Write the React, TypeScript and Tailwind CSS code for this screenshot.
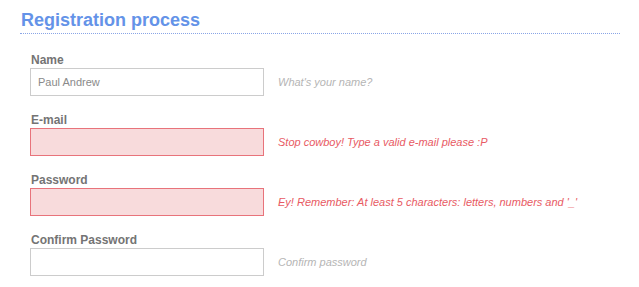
import React from 'react';

interface Field {
  label: string;
  value?: string;
  hint: string;
  error?: boolean;
}

const fields: Field[] = [
  { label: 'Name', value: 'Paul Andrew', hint: "What's your name?" },
  { label: 'E-mail', hint: 'Stop cowboy! Type a valid e-mail please :P', error: true },
  { label: 'Password', hint: "Ey! Remember: At least 5 characters: letters, numbers and '_'", error: true },
  { label: 'Confirm Password', hint: 'Confirm password' },
];

export default function App() {
  return (
    <div className="min-h-screen bg-white pl-[20px] pt-[8px] font-['Liberation_Sans',Arial,sans-serif]">
      <h1 className="w-[600px] border-b border-dotted border-[#8aa5e6] pl-[1px] pb-[1px] text-[18px] font-bold leading-[24px] text-[#6493e8]">
        Registration process
      </h1>
      <div className="mt-[19px] flex flex-col gap-[17px] pl-[10px]">
        {fields.map((f) => (
          <div key={f.label} className="flex flex-col">
            <label className="mb-[1px] pl-[1px] text-[12px] font-bold leading-[14px] text-[#747474]">
              {f.label}
            </label>
            <div className="flex items-center gap-[14px]">
              <input
                type="text"
                defaultValue={f.value}
                className={`h-[28px] w-[234px] border px-[7px] text-[11px] text-[#8a8a8a] outline-none ${
                  f.error ? 'border-[#e8737b] bg-[#f8dbdc]' : 'border-[#cccccc] bg-white'
                }`}
              />
              <span
                className={`text-[11px] italic ${f.error ? 'text-[#e85a63]' : 'text-[#b5b5b5]'}`}
              >
                {f.hint}
              </span>
            </div>
          </div>
        ))}
      </div>
    </div>
  );
}
